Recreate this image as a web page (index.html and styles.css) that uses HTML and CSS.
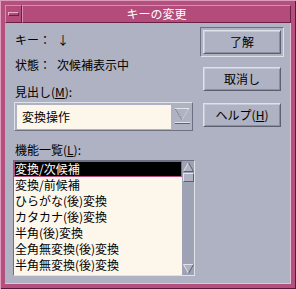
FILE: index.html
```html
<!DOCTYPE html>
<html lang="ja">
<head>
  <meta charset="UTF-8" />
  <title>キーの変更</title>
  <link rel="stylesheet" href="styles.css">
</head>
<body>

<!-- ウィンドウ枠 -->
<div class="window">
  <div class="titlebar">
    <div class="menu-btn"><span class="menu-bar"></span></div>
    <div class="title">キーの変更</div>
  </div>

  <div class="client">
    <!-- 左側: 情報とリスト -->
    <div class="left">
      <div class="row row-key"><span class="label">キー：</span><span class="value">↓</span></div>
      <div class="row row-state"><span class="label">状態：</span><span class="value">次候補表示中</span></div>

      <div class="caption caption-heading">見出し(<u>M</u>):</div>
      <div class="combo">
        <div class="combo-field">変換操作</div>
        <div class="combo-arrow">
          <svg width="19" height="24" viewBox="0 0 19 24">
            <line x1="2" y1="3.5" x2="16" y2="3.5" stroke="#e2e4ec" />
            <line x1="2.5" y1="4" x2="9" y2="15" stroke="#5c6070" stroke-dasharray="1 1" />
            <line x1="15.5" y1="4" x2="9" y2="15" stroke="#e2e4ec" stroke-dasharray="1 1" />
            <rect x="2" y="17" width="15" height="1" fill="#e2e4ec" />
            <rect x="2" y="18" width="15" height="1" fill="#5c6070" />
          </svg>
        </div>
      </div>

      <div class="caption caption-list">機能一覧(<u>L</u>):</div>
      <div class="list">
        <ul class="items">
          <li class="selected">変換/次候補</li>
          <li>変換/前候補</li>
          <li>ひらがな(後)変換</li>
          <li>カタカナ(後)変換</li>
          <li>半角(後)変換</li>
          <li>全角無変換(後)変換</li>
          <li>半角無変換(後)変換</li>
          <li>候補確定</li>
        </ul>
        <div class="scrollbar">
          <svg class="arrow" width="11" height="10" viewBox="0 0 11 10">
            <polygon points="5.5,0.5 10.5,9.5 0.5,9.5" fill="#aeb2c3" />
            <line x1="5.5" y1="0.5" x2="0.5" y2="9.5" stroke="#e2e4ec" />
            <line x1="5.5" y1="0.5" x2="10.5" y2="9.5" stroke="#5c6070" />
            <line x1="0.5" y1="9.5" x2="10.5" y2="9.5" stroke="#5c6070" />
          </svg>
          <div class="slider"></div>
          <div class="trough"></div>
          <svg class="arrow" width="11" height="10" viewBox="0 0 11 10">
            <polygon points="0.5,0.5 10.5,0.5 5.5,9.5" fill="#aeb2c3" />
            <line x1="0.5" y1="0.5" x2="10.5" y2="0.5" stroke="#e2e4ec" />
            <line x1="0.5" y1="0.5" x2="5.5" y2="9.5" stroke="#e2e4ec" />
            <line x1="10.5" y1="0.5" x2="5.5" y2="9.5" stroke="#5c6070" />
          </svg>
        </div>
      </div>
    </div>

    <!-- 右側: ボタン -->
    <div class="right">
      <div class="default-ring"><button class="btn">了解</button></div>
      <button class="btn btn-cancel">取消し</button>
      <button class="btn btn-help">ヘルプ(<u>H</u>)</button>
    </div>
  </div>
</div>

</body>
</html>
```

FILE: styles.css
```css
* {
  box-sizing: border-box;
}

body {
  margin: 0;
  font-family: "Noto Sans CJK JP", sans-serif;
  font-size: 12px;
  line-height: 16px;
  color: #000;
  background: #aeb2c3;
}

u {
  text-decoration: underline;
  text-underline-offset: 1px;
}

/* ウィンドウ枠 */
.window {
  width: 296px;
  height: 289px;
  padding: 5px;
  background: #b4507e;
  display: flex;
  flex-direction: column;
  box-shadow: inset 1px 1px 0 #e09cbd, inset -1px -1px 0 #5c183c;
}

.titlebar {
  height: 18px;
  display: flex;
}

.menu-btn,
.title {
  background: #b34b7b;
  border: 1px solid;
  border-color: #d98cb1 #6a1f45 #6a1f45 #d98cb1;
}

.menu-btn {
  width: 17px;
  display: flex;
  align-items: center;
  justify-content: center;
}

.menu-bar {
  width: 11px;
  height: 4px;
  background: #b34b7b;
  border: 1px solid;
  border-color: #e8b4cc #6a1f45 #6a1f45 #e8b4cc;
}

.title {
  flex: 1;
  color: #fff;
  text-align: center;
}

.client {
  flex: 1;
  background: #aeb2c3;
  display: flex;
  padding: 4px 7px 0 8px;
  box-shadow: inset -1px -1px 0 #e4c4d4;
}

/* 左側 */
.left {
  width: 182px;
  display: flex;
  flex-direction: column;
}

.row {
  display: flex;
  height: 16px;
  margin-left: 2px;
}

.row-key {
  margin-top: 5px;
}

.row-state {
  margin-top: 9px;
}

.label {
  width: 42px;
  white-space: nowrap;
}

.caption {
  margin-left: 2px;
  height: 16px;
}

.caption-heading,
.caption-list {
  margin-top: 11px;
}

.combo {
  margin-top: 2px;
  margin-left: 1px;
  width: 179px;
  height: 29px;
  display: flex;
  padding: 2px 0 1px 2px;
  border: 1px solid;
  border-color: #e0e2ea #6c7082 #6c7082 #e0e2ea;
}

.combo-field {
  width: 154px;
  height: 24px;
  padding: 4px 0 0 5px;
  background: #fdf6ea;
}

.combo-arrow {
  width: 19px;
  margin-left: 2px;
}

.combo-arrow svg {
  display: block;
}

.list {
  margin-top: 2px;
  height: 116px;
  display: flex;
  border: 1px solid;
  border-color: #6c7082 #e0e2ea #e0e2ea #6c7082;
}

.items {
  list-style: none;
  margin: 0;
  padding: 0;
  width: 168px;
  background: #fdf6ea;
  overflow: hidden;
}

.items li {
  height: 16px;
  padding-left: 1px;
  white-space: nowrap;
}

.items .selected {
  background: #000;
  color: #fff;
  box-shadow: inset 0 0 0 1px #b4507e;
}

.scrollbar {
  width: 12px;
  background: #9ea2b4;
  display: flex;
  flex-direction: column;
  align-items: center;
  padding: 1px 0 1px 0;
}

.arrow {
  display: block;
  flex-shrink: 0;
}

.slider {
  width: 11px;
  height: 9px;
  margin-top: 1px;
  background: #aeb2c3;
  border: 1px solid;
  border-color: #e0e2ea #5c6070 #5c6070 #e0e2ea;
}

.trough {
  flex: 1;
}

/* 右側のボタン */
.right {
  width: 84px;
  margin-left: 5px;
  display: flex;
  flex-direction: column;
}

.default-ring {
  width: 84px;
  height: 30px;
  padding: 2px;
  border: 1px solid;
  border-color: #6c7082 #e0e2ea #e0e2ea #6c7082;
}

.btn {
  width: 78px;
  height: 24px;
  margin: 0;
  padding: 0;
  font: inherit;
  line-height: 16px;
  color: #000;
  background: #aeb2c3;
  border: 1px solid;
  border-color: #e0e2ea #5c6070 #5c6070 #e0e2ea;
  box-shadow: inset 1px 1px 0 #c6c9d6, inset -1px -1px 0 #8a8e9e;
}

.btn-cancel {
  margin: 10px 0 0 3px;
}

.btn-help {
  margin: 12px 0 0 3px;
}
```
